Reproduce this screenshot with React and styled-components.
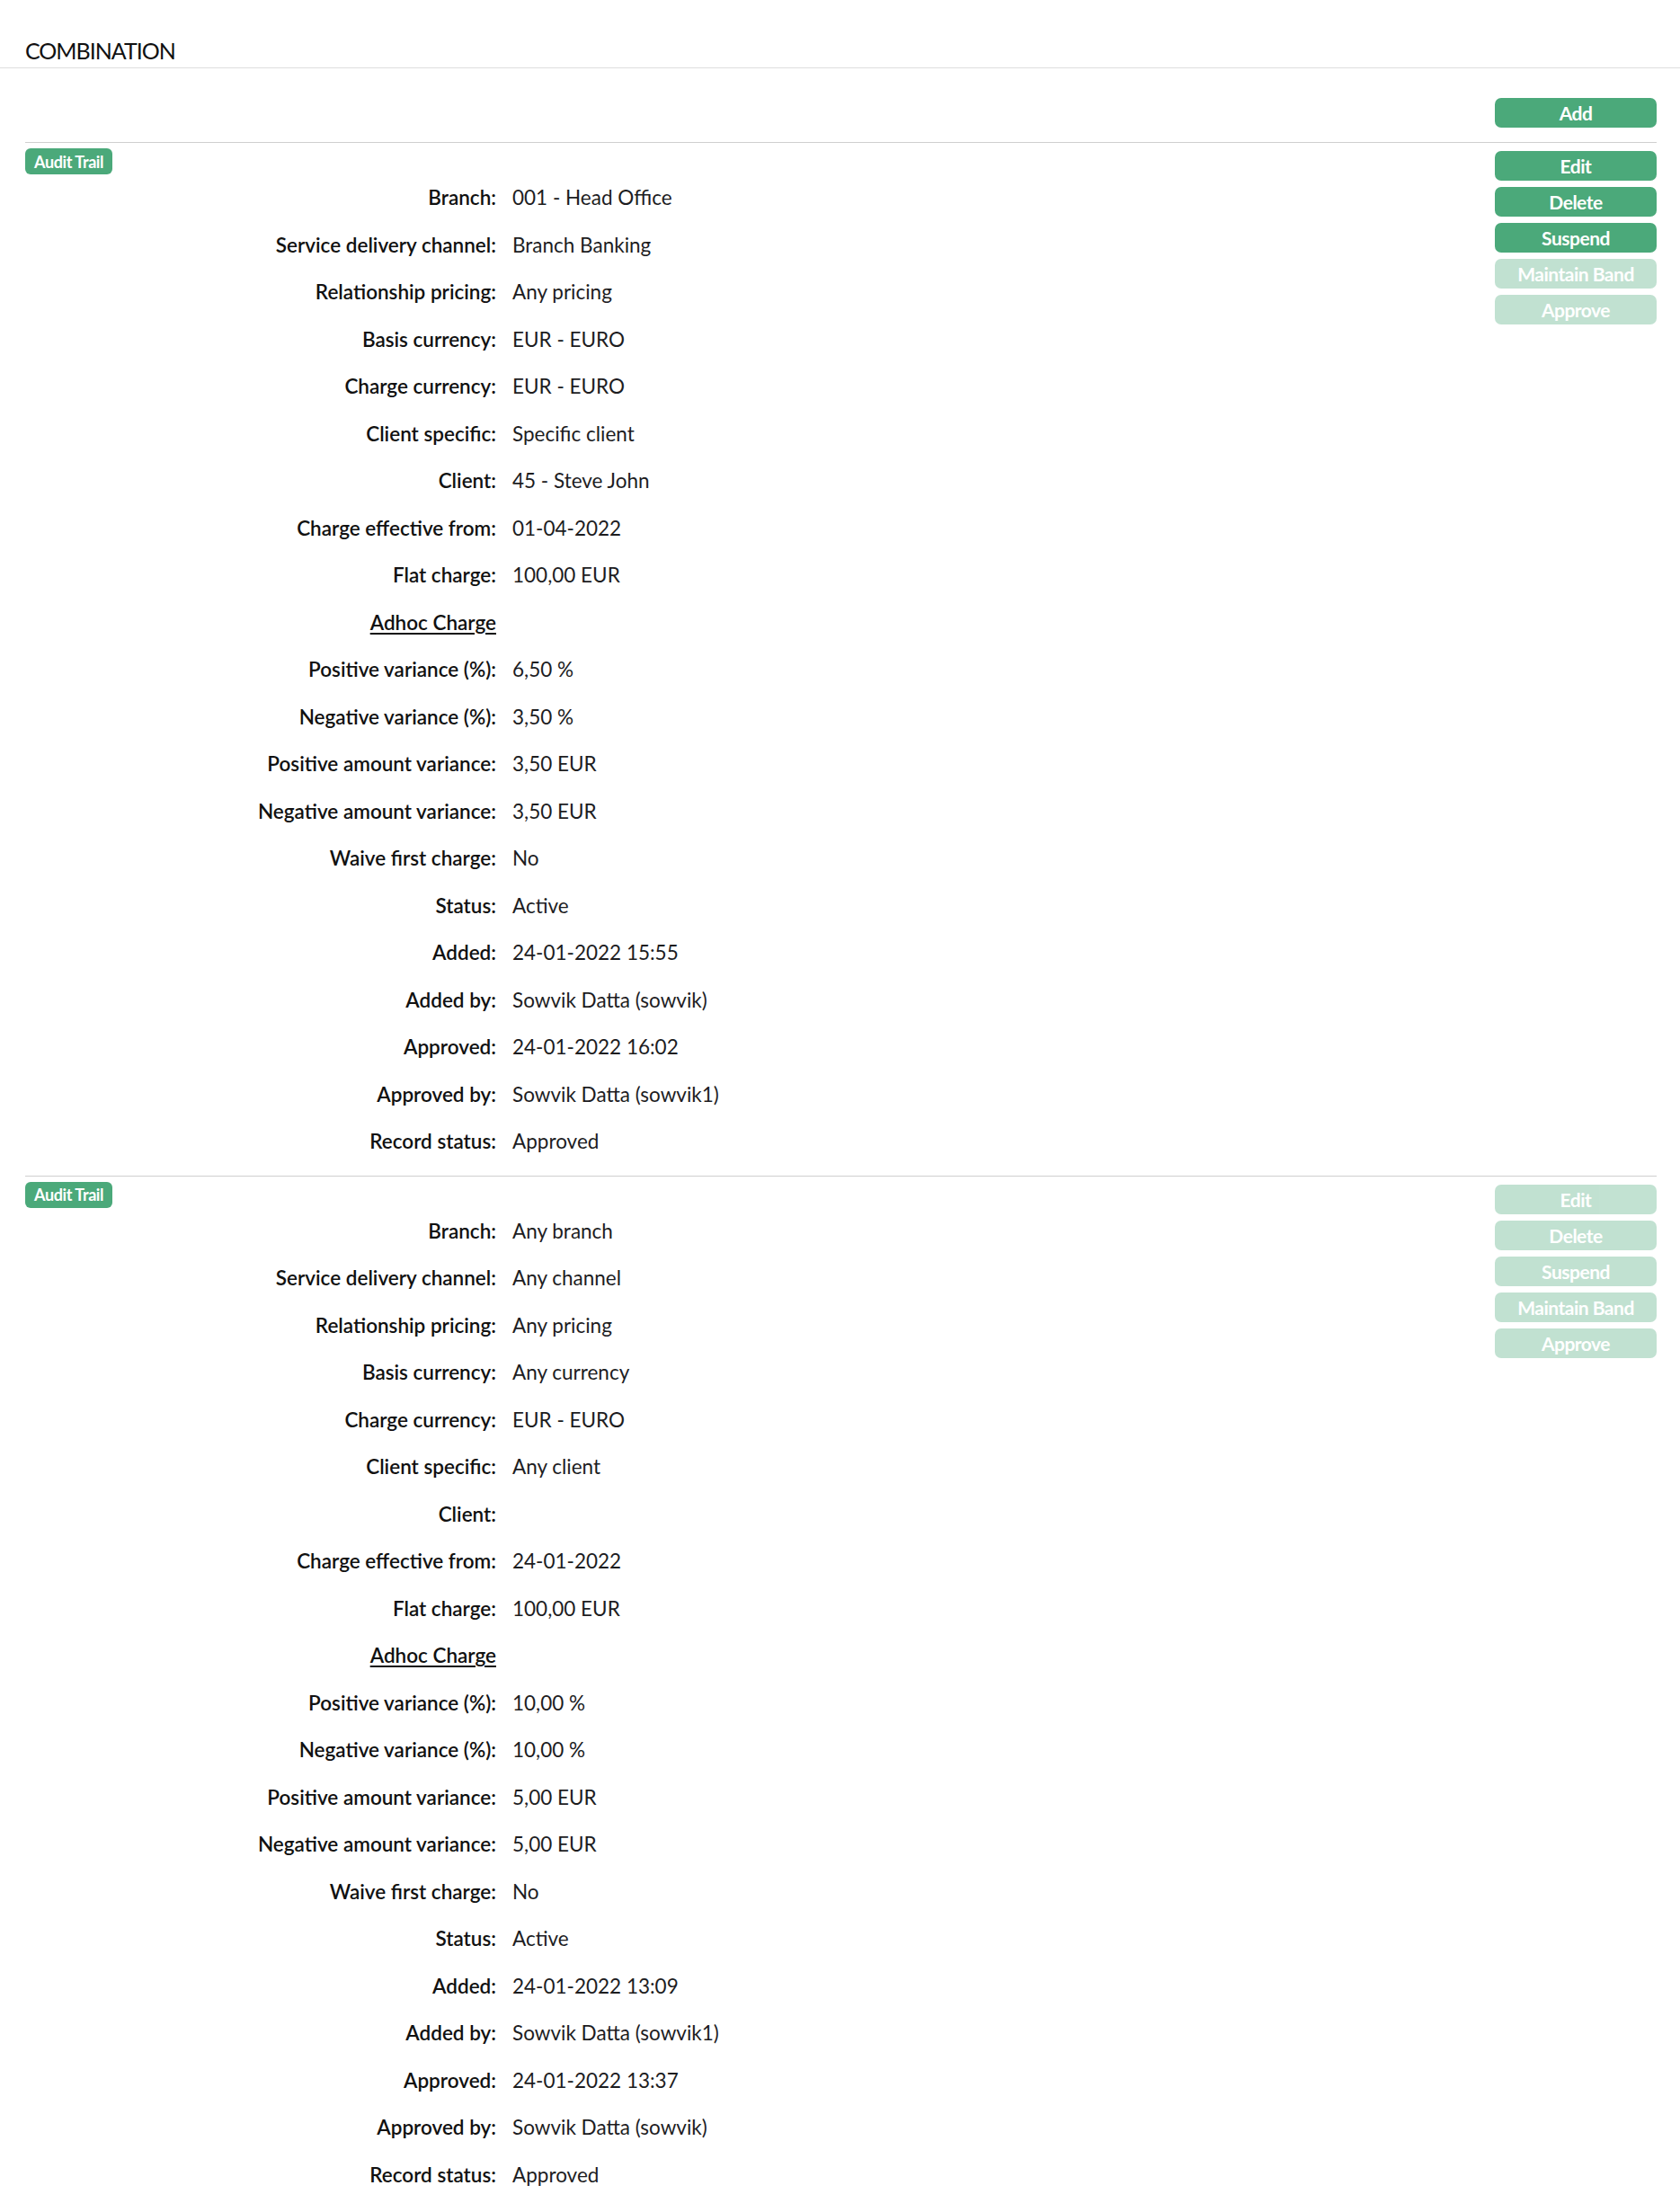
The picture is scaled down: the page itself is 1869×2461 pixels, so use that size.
import styled, { createGlobalStyle } from 'styled-components';

const GlobalStyle = createGlobalStyle`
  html, body { margin: 0; padding: 0; background: #fff; }
  body {
    font-family: 'Lato', 'Open Sans', sans-serif;
    color: #1d1d1f;
  }
`;

const RECORDS = [
  {
    id: 1,
    actions: { edit: true, delete: true, suspend: true, band: false, approve: false },
    rows: [
      ['Branch', '001 - Head Office'],
      ['Service delivery channel', 'Branch Banking'],
      ['Relationship pricing', 'Any pricing'],
      ['Basis currency', 'EUR - EURO'],
      ['Charge currency', 'EUR - EURO'],
      ['Client specific', 'Specific client'],
      ['Client', '45 - Steve John'],
      ['Charge effective from', '01-04-2022'],
      ['Flat charge', '100,00 EUR'],
      ['ADHOC'],
      ['Positive variance (%)', '6,50 %'],
      ['Negative variance (%)', '3,50 %'],
      ['Positive amount variance', '3,50 EUR'],
      ['Negative amount variance', '3,50 EUR'],
      ['Waive first charge', 'No'],
      ['Status', 'Active'],
      ['Added', '24-01-2022 15:55'],
      ['Added by', 'Sowvik Datta (sowvik)'],
      ['Approved', '24-01-2022 16:02'],
      ['Approved by', 'Sowvik Datta (sowvik1)'],
      ['Record status', 'Approved'],
    ],
  },
  {
    id: 2,
    actions: { edit: false, delete: false, suspend: false, band: false, approve: false },
    rows: [
      ['Branch', 'Any branch'],
      ['Service delivery channel', 'Any channel'],
      ['Relationship pricing', 'Any pricing'],
      ['Basis currency', 'Any currency'],
      ['Charge currency', 'EUR - EURO'],
      ['Client specific', 'Any client'],
      ['Client', ''],
      ['Charge effective from', '24-01-2022'],
      ['Flat charge', '100,00 EUR'],
      ['ADHOC'],
      ['Positive variance (%)', '10,00 %'],
      ['Negative variance (%)', '10,00 %'],
      ['Positive amount variance', '5,00 EUR'],
      ['Negative amount variance', '5,00 EUR'],
      ['Waive first charge', 'No'],
      ['Status', 'Active'],
      ['Added', '24-01-2022 13:09'],
      ['Added by', 'Sowvik Datta (sowvik1)'],
      ['Approved', '24-01-2022 13:37'],
      ['Approved by', 'Sowvik Datta (sowvik)'],
      ['Record status', 'Approved'],
    ],
  },
];

const ACTIONS = [
  ['edit', 'Edit'],
  ['delete', 'Delete'],
  ['suspend', 'Suspend'],
  ['band', 'Maintain Band'],
  ['approve', 'Approve'],
];

function App() {
  return (
    <>
      <GlobalStyle />
      <Header>
        <Title>COMBINATION</Title>
      </Header>
      <Body>
        <Toolbar>
          <ActionButton type="button">Add</ActionButton>
        </Toolbar>

        {RECORDS.map((rec) => (
          <Record key={rec.id}>
            <Main>
              <Badge>Audit Trail</Badge>
              <Details>
                {rec.rows.map(([label, value]) =>
                  label === 'ADHOC' ? (
                    <Row key={label}>
                      <SubHeading>Adhoc Charge</SubHeading>
                      <Value />
                    </Row>
                  ) : (
                    <Row key={label}>
                      <Label>{label}:</Label>
                      <Value>{value}</Value>
                    </Row>
                  )
                )}
              </Details>
            </Main>
            <Actions>
              {ACTIONS.map(([key, text]) => (
                <ActionButton key={key} type="button" $disabled={!rec.actions[key]}>
                  {text}
                </ActionButton>
              ))}
            </Actions>
          </Record>
        ))}
      </Body>
    </>
  );
}

export default App;

/* ========== Styled ========== */

const Header = styled.header`
  padding: 40px 28px 3px;
  border-bottom: 1px solid #dedede;
`;

const Title = styled.h1`
  margin: 0;
  font-size: 25px; line-height: 32px; font-weight: 400;
  letter-spacing: -1px;
  color: #111;
`;

const Body = styled.main`
  padding: 0 26px 0 28px;
`;

const Toolbar = styled.div`
  display: flex; justify-content: flex-end;
  padding: 33px 0 16px;
`;

const Record = styled.section`
  display: flex; align-items: flex-start;
  border-top: 1px solid #cfcfcf;
  padding-bottom: 11px;
`;

const Main = styled.div`
  flex: 1; min-width: 0;
  padding-top: 6px;
`;

const Badge = styled.span`
  display: inline-flex; align-items: center;
  height: 29px; padding: 0 10px;
  font-size: 18px; font-weight: 700; letter-spacing: -0.4px;
  color: #fff; background: #4ba97a;
  border-radius: 6px;
`;

const Details = styled.div`
  display: grid;
  grid-template-columns: 524px 1fr;
  grid-auto-rows: 52.5px;
  column-gap: 18px;
`;

const Row = styled.div`
  display: contents;
`;

const Label = styled.div`
  text-align: right;
  font-size: 22.5px; line-height: 52.5px; font-weight: 600;
  letter-spacing: 0;
  color: #111;
  white-space: nowrap;
`;

const SubHeading = styled(Label)`
  text-decoration: underline;
  text-underline-offset: 3px;
  text-decoration-thickness: 1.5px;
`;

const Value = styled.div`
  font-size: 22.5px; line-height: 52.5px; font-weight: 400;
  color: #1d1d1f;
  white-space: nowrap;
`;

const Actions = styled.div`
  display: flex; flex-direction: column; gap: 7px;
  width: 180px; flex-shrink: 0;
  padding-top: 9px;
`;

const ActionButton = styled.button`
  width: 180px; height: 33px; padding: 0;
  font-family: inherit; font-size: 21px; font-weight: 700;
  letter-spacing: -0.5px;
  color: #fff; background: #4ba97a;
  border: none; border-radius: 7px;
  opacity: ${({ $disabled }) => ($disabled ? 0.34 : 1)};
  cursor: ${({ $disabled }) => ($disabled ? 'default' : 'pointer')};
`;
